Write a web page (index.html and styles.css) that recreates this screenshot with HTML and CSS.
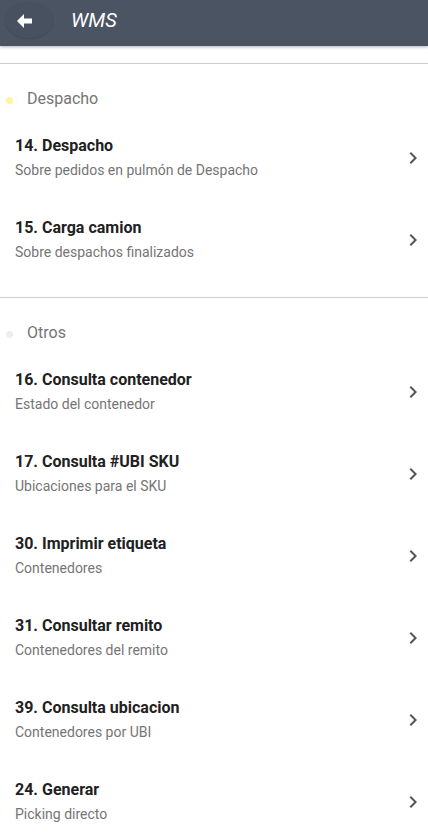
FILE: index.html
```html
<!DOCTYPE html>
<html lang="es">
<head>
<meta charset="utf-8">
<title>WMS</title>
<link rel="stylesheet" href="styles.css">
</head>
<body>
<header class="toolbar">
  <button class="back" aria-label="Volver">
    <svg width="16" height="14" viewBox="0 0 16 14"><path d="M0 7 L7 0 L7 4.5 L15 4.5 L15 9.5 L7 9.5 L7 14 Z" fill="#fff"/></svg>
  </button>
  <h1 class="title">WMS</h1>
</header>
<main class="content">
  <section class="group">
    <div class="group-head"><span class="dot dot-yellow"></span>Despacho</div>
    <a class="item"><div class="item-text"><div class="item-title">14. Despacho</div><div class="item-sub">Sobre pedidos en pulmón de Despacho</div></div><svg class="chev" width="24" height="24" viewBox="0 0 24 24"><path d="M10 6L8.59 7.41 13.17 12l-4.58 4.59L10 18l6-6z"/></svg></a>
    <a class="item"><div class="item-text"><div class="item-title">15. Carga camion</div><div class="item-sub">Sobre despachos finalizados</div></div><svg class="chev" width="24" height="24" viewBox="0 0 24 24"><path d="M10 6L8.59 7.41 13.17 12l-4.58 4.59L10 18l6-6z"/></svg></a>
  </section>
  <section class="group">
    <div class="group-head"><span class="dot dot-grey"></span>Otros</div>
    <a class="item"><div class="item-text"><div class="item-title">16. Consulta contenedor</div><div class="item-sub">Estado del contenedor</div></div><svg class="chev" width="24" height="24" viewBox="0 0 24 24"><path d="M10 6L8.59 7.41 13.17 12l-4.58 4.59L10 18l6-6z"/></svg></a>
    <a class="item"><div class="item-text"><div class="item-title">17. Consulta #UBI SKU</div><div class="item-sub">Ubicaciones para el SKU</div></div><svg class="chev" width="24" height="24" viewBox="0 0 24 24"><path d="M10 6L8.59 7.41 13.17 12l-4.58 4.59L10 18l6-6z"/></svg></a>
    <a class="item"><div class="item-text"><div class="item-title">30. Imprimir etiqueta</div><div class="item-sub">Contenedores</div></div><svg class="chev" width="24" height="24" viewBox="0 0 24 24"><path d="M10 6L8.59 7.41 13.17 12l-4.58 4.59L10 18l6-6z"/></svg></a>
    <a class="item"><div class="item-text"><div class="item-title">31. Consultar remito</div><div class="item-sub">Contenedores del remito</div></div><svg class="chev" width="24" height="24" viewBox="0 0 24 24"><path d="M10 6L8.59 7.41 13.17 12l-4.58 4.59L10 18l6-6z"/></svg></a>
    <a class="item"><div class="item-text"><div class="item-title">39. Consulta ubicacion</div><div class="item-sub">Contenedores por UBI</div></div><svg class="chev" width="24" height="24" viewBox="0 0 24 24"><path d="M10 6L8.59 7.41 13.17 12l-4.58 4.59L10 18l6-6z"/></svg></a>
    <a class="item"><div class="item-text"><div class="item-title">24. Generar</div><div class="item-sub">Picking directo</div></div><svg class="chev" width="24" height="24" viewBox="0 0 24 24"><path d="M10 6L8.59 7.41 13.17 12l-4.58 4.59L10 18l6-6z"/></svg></a>
  </section>
</main>
</body>
</html>
```

FILE: styles.css
```css
html, body {
  margin: 0;
  padding: 0;
  background: #fff;
  font-family: Roboto, "Noto Sans", sans-serif;
  overflow: hidden;
}
.toolbar {
  position: relative;
  z-index: 2;
  height: 46px;
  background: #4a5462;
  display: flex;
  align-items: center;
  box-shadow: 0 1px 3px rgba(0,0,0,0.3);
}
.back {
  width: 48px;
  height: 36px;
  margin: -6px 0 0 5px;
  border: none;
  border-radius: 50%;
  background: #475160;
  box-shadow: 0 1px 2px rgba(0,0,0,0.12);
  display: flex;
  align-items: center;
  justify-content: flex-start;
  padding: 0 0 0 12px;
  padding-top: 2px;
  cursor: pointer;
}
.back svg { display: block; }
.title {
  margin: 0 0 0 18px;
  color: #fff;
  font-size: 20px;
  font-style: italic;
  font-weight: 400;
  line-height: 24px;
  margin-top: -6px;
}
.content {
  padding-top: 17px;
}
.group {
  border-top: 1px solid #cccccc;
  padding-bottom: 16px;
}
.group-head {
  display: flex;
  align-items: center;
  padding: 25px 0 8px 0;
  line-height: 20px;
  font-size: 16px;
  color: #757575;
}
.dot {
  width: 7px;
  height: 7px;
  border-radius: 50%;
  margin: 2px 14px 0 6px;
}
.dot-yellow { background: #fff59d; }
.dot-grey { background: #eeeeee; }
.item {
  display: flex;
  align-items: center;
  height: 82px;
  box-sizing: border-box;
  padding: 0 3px 0 15px;
  text-decoration: none;
}
.item-text {
  flex: 1;
}
.item-title {
  font-size: 16px;
  line-height: 20px;
  font-weight: 700;
  color: #212121;
}
.item-sub {
  margin-top: 4px;
  font-size: 14px;
  line-height: 20px;
  color: #757575;
}
.chev {
  fill: #555555;
  display: block;
}
```
